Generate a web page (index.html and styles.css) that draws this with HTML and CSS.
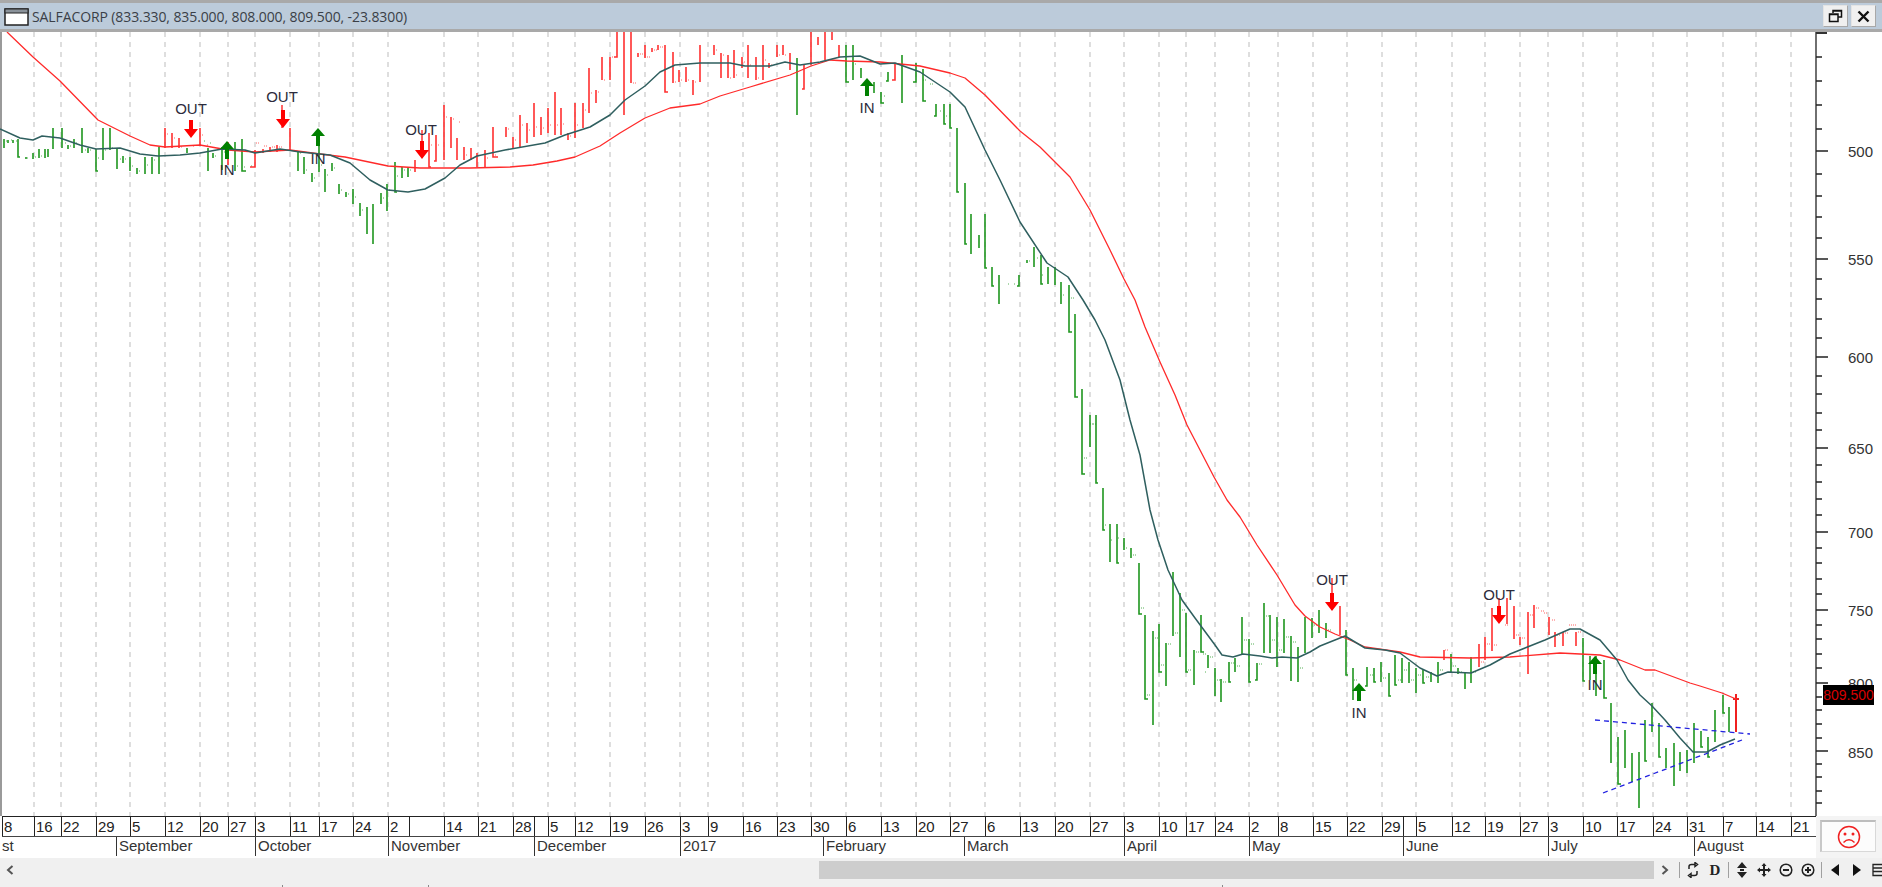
FILE: index.html
```html
<!DOCTYPE html>
<html lang="en">
<head>
<meta charset="utf-8">
<title>SALFACORP</title>
<link rel="stylesheet" href="styles.css">
</head>
<body>
<div class="window">
  <header class="titlebar">
    <svg class="winicon" width="25" height="18" viewBox="0 0 25 18"><rect x="1" y="1" width="23" height="16" fill="#fff" stroke="#222" stroke-width="1.5"/><rect x="1" y="1" width="23" height="4" fill="#8a929a" stroke="#222" stroke-width="1"/></svg>
    <span class="title">SALFACORP (833.330, 835.000, 808.000, 809.500, -23.8300)</span>
    <div class="winbtns">
      <button class="winbtn"><svg width="15" height="14" viewBox="0 0 15 14"><path d="M5 4V1.500H13.500V8H10.500M1.500 5H10V12.500H1.500Z M1.500 5.500H10M5 2H13.500" fill="none" stroke="#111" stroke-width="1.500"/></svg></button>
      <button class="winbtn"><svg width="13" height="13" viewBox="0 0 13 13"><path d="M1.500 1.500L11.500 11.500M11.500 1.500L1.500 11.500" fill="none" stroke="#111" stroke-width="2.400"/></svg></button>
    </div>
  </header>

  <svg class="chart" width="1882" height="784" viewBox="0 32 1882 784">
    <defs>
      <path id="down" d="M-2 0H2V9H7L0 18L-7 9H-2Z"/>
      <path id="up" d="M-2 18H2V8H7L0 0L-7 8H-2Z"/>
    </defs>
    <path class="frame" d="M1 32V816"/>
    <path class="grid" d="M34 32V816M61 32V816M96 32V816M130 32V816M165 32V816M200 32V816M228 32V816M255 32V816M290 32V816M319 32V816M353 32V816M388 32V816M444 32V816M478 32V816M513 32V816M548 32V816M575 32V816M610 32V816M645 32V816M680 32V816M708 32V816M743 32V816M777 32V816M811 32V816M846 32V816M881 32V816M916 32V816M950 32V816M985 32V816M1020 32V816M1055 32V816M1090 32V816M1124 32V816M1159 32V816M1186 32V816M1215 32V816M1249 32V816M1278 32V816M1313 32V816M1347 32V816M1382 32V816M1416 32V816M1452 32V816M1485 32V816M1520 32V816M1548 32V816M1583 32V816M1617 32V816M1653 32V816M1687 32V816M1723 32V816M1756 32V816M1791 32V816"/>

    <path class="ticks green" d="M6 141h2M11 140h2M16 141h2M27 158h2M35 157h2M41 156h2M65 143h2M70 146h2M76 143h2M85 150h2M90 150h2M98 158h2M105 150h2M112 148h2M120 159h2M125 159h2M132 166h2M139 171h2M147 165h2M154 160h2M204 141h2M210 143h2M215 156h2M224 152h2M237 166h2M244 167h2M251 166h2M300 153h2M306 170h2M314 178h2M321 165h2M327 175h2M334 168h2M341 190h2M348 194h2M355 197h2M362 210h2M383 198h2M389 190h2M397 176h2M404 170h2M410 170h2M855 64h2M884 96h2M923 80h3M930 84h3M940 111h2M946 116h2M1008 284h2M1014 284h2M1029 261h2M1037 258h2M1042 275h2M1063 295h2M1071 298h3M1084 458h3M1090 424h3M1096 424h-3M1105 525h2M1111 540h2M1118 538h2M1126 548h2M1133 555h3M1141 608h3M1147 695h3M1155 638h3M1161 665h3M1168 644h3M1175 633h3M1182 610h3M1188 670h3M1196 652h3M1203 654h3M1210 657h3M1205 672h2M1217 680h3M1223 682h3M1231 663h3M1237 666h3M1244 640h3M1251 644h3M1259 664h3M1266 616h3M1272 640h3M1279 650h3M1286 637h3M1293 642h3M1300 668h3M1314 625h3M1328 630h3M1354 680h3M1370 675h3M1383 678h3M1398 680h3M1404 670h3M1411 680h3M1418 675h3M1426 677h3M1440 670h3M1453 666h3M1459 672h3M1473 672h3"/>
    <path class="ticks red" d="M167 134h2M174 138h2M181 147h2M193 146h2M202 135h2M207 145h2M230 150h2M256 143h3M264 146h3M272 147h3M279 147h3M431 145h2M438 145h2M446 117h2M453 119h2M459 122h2M466 155h2M473 158h2M487 158h2M495 155h2M508 129h2M515 140h2M522 125h2M529 130h2M536 127h2M543 128h2M550 125h2M557 125h2M563 124h2M570 136h2M577 125h2M585 110h2M591 93h2M598 92h2M604 80h2M612 57h2M633 83h3M640 54h3M647 57h3M654 50h3M660 47h3M675 82h2M681 80h2M688 80h2M695 82h2M716 50h2M723 55h2M730 78h2M736 75h2M744 62h2M750 65h2M758 78h2M765 60h2M771 65h2M779 55h2M785 55h2M1445 650h3M1481 662h3M1487 644h3M1494 645h3M1505 625h3M1516 635h3M1522 638h3M1530 615h3M1536 608h3M1541 611h3M1544 613h3M1552 620h3M1557 635h3M1565 633h3M1569 625h3M1573 625h3M1578 632h3"/>
    <path class="bars green" d="M4 139V148M8 140V143M13 140V143M18 139V157h2M26 157V159M33 153V159M39 149V158M45 149V158M48 149V157M53 128V149M62 128V148M68 145V149M74 139V148M82 128V153M88 148V153M96 149V171h2M103 128V160M110 128V150M117 148V169M123 156V163M130 157V171M137 168V174M145 157V174M152 157V174M159 147V174M187 148V153M208 148V171M213 153V158M222 147V170M235 142V171M242 139V171h4M298 151V171M304 157V174M312 173V182M319 130V172M325 169V192M332 163V171M339 184V194M346 192V197M353 189V204M360 203V216M367 207V234M373 204V244M381 193V204M387 184V211M395 162V192h2M402 167V178M408 167V177M797 58V115M846 45V82h3M853 45V80M861 68V78M874 82V93M881 92V103h3M888 72V81h-2M902 55V103M916 63V82h-3M923 69V101h3M936 104V116h-2M944 104V124h2M950 104V128h2M957 128V192h2M965 183V244h2M971 214V254M979 235V248M985 214V268h2M992 267V286h2M999 275V304M1019 275V286h-2M1027 260V263M1034 247V267M1041 255V284h2M1048 267V284M1055 267V285M1061 282V304M1069 285V332h3M1075 314V397h3M1082 389V474h3M1090 415V447M1096 415V483h2M1103 488V530h2M1110 524V562M1117 524V563h2M1124 538V550M1131 548V558M1139 563V614h3M1145 615V699h3M1153 631V725M1159 624V672h3M1166 643V686M1173 572V636M1180 593V657M1186 613V672h2M1194 650V685M1201 615V652h3M1208 655V668M1215 668V696M1221 679V702M1229 662V682h2M1235 658V672M1242 617V654M1249 639V682h2M1257 663V680h-2M1264 603V653M1270 615V653M1277 617V667M1284 619V653M1291 636V681M1298 647V682M1305 617V653M1312 618V638M1319 610V633M1326 623V638M1346 630V675h2M1353 668V700M1367 667V686h-2M1374 668V682h2M1381 662V682M1389 673V696h2M1395 655V685h2M1402 658V683M1409 662V683M1416 668V693M1423 670V683h2M1431 672V682M1438 662V683M1451 654V672M1458 668V674M1465 673V689M1471 657V683M1583 638V681h2M1590 656V680M1596 656V696M1604 660V698h3M1611 703V763M1618 737V784h3M1625 730V768M1632 753V782M1639 752V808M1645 720V761h2M1652 703V732M1659 723V757h2M1666 748V768M1674 743V786M1680 752V771M1687 750V773M1694 723V763M1701 731V747h2M1708 737V757h2M1715 710V742M1723 695V713h2M1729 707V732"/>
    <path class="bars red" d="M165 128V148M172 133V148M179 138V148M200 128V145M228 142V165M255 150V167h-5M263 149V153M270 147V152M277 145V152M290 128V150M415 160V172M429 133V167h2M436 135V161h-2M444 105V160M451 117V148M457 138V160M464 147V160M471 148V160M477 153V167M485 150V167M493 127V157h5M506 127V137M513 137V148M520 115V148M527 123V143M534 103V137M541 117V135M548 108V133M555 92V135M561 108V135M568 133V140M575 103V138M583 103V128M589 68V113M596 90V103M602 57V80M610 57V80M617 32V57h-3M624 32V115M631 32V83M638 53V57M645 45V58M652 48V52M658 45V50M665 45V92h3M673 52V83M679 70V82M686 67V82M693 80V95M700 45V82M714 45V55M721 53V78M728 55V78M734 50V78M742 57V68M748 45V78M756 57V80M763 45V80M769 63V68M777 45V57M783 45V55M790 53V70M804 65V89h-2M811 32V65M818 37V45M825 32V60M832 32V40M839 45V57M895 63V80h-3M1340 606V635M1444 650V660M1479 644V667M1485 637V660M1492 608V651M1507 598V624M1514 606V639M1520 637V645M1528 612V674M1534 605V628M1549 617V635M1555 632V647M1563 632V646M1576 632V646"/>
    <path class="lastbar" d="M1736 694V732M1733 699H1739"/>

    <polyline class="ma-slow" points="7,32 33,57 60,81 98,120 130,136 150,145 165,147 200,145 228,150 255,152 290,150 320,154 345,157 388,166 420,168 444,168 470,168 510,167 533,165 557,161 575,157 600,146 620,133 645,118 670,108 700,104 720,96 750,87 790,75 811,66 830,60 847,61 880,62 920,66 950,73 965,78 985,95 1020,131 1040,147 1058,165 1070,177 1090,210 1110,250 1124,279 1135,300 1145,327 1160,362 1175,395 1187,425 1200,450 1214,477 1227,500 1240,517 1257,545 1277,575 1295,605 1305,616 1320,627 1335,634 1350,640 1365,647 1400,652 1420,657 1470,658 1510,657 1560,653 1600,655 1620,660 1645,670 1655,670 1690,683 1700,686 1722,693 1736,699"/>
    <polyline class="ma-fast" points="0,129 20,138 33,140 42,136 60,138 80,145 96,149 120,148 140,154 158,156 180,155 200,153 222,149 245,150 255,153 280,149 300,152 330,155 350,163 370,180 388,190 408,192 425,189 445,178 460,165 477,156 505,150 545,143 565,135 590,127 610,115 625,100 645,86 660,72 675,65 700,63 730,63 745,66 770,66 785,62 800,65 820,62 840,57 860,56 880,64 895,63 920,72 950,92 965,107 985,150 1000,180 1020,222 1047,263 1068,277 1083,300 1095,320 1105,340 1120,380 1130,420 1140,455 1150,510 1158,540 1168,570 1182,600 1195,618 1215,645 1222,655 1233,657 1243,654 1260,656 1272,658 1282,657 1297,658 1310,652 1320,646 1345,636 1365,648 1385,650 1400,653 1420,668 1437,676 1448,672 1471,673 1490,665 1510,654 1545,640 1570,629 1580,629 1600,640 1617,660 1628,680 1640,695 1652,706 1665,720 1680,738 1693,752 1707,752 1720,745 1735,739"/>

    <path class="trend" d="M1595 720L1750 734M1603 793L1742 740"/>

    <g class="sell">
      <path class="stem" d="M282 105V128M422 130V158M1332 578V610M1499 598V622"/>
      <use href="#down" x="191" y="120"/>
      <use href="#down" x="283" y="110"/>
      <use href="#down" x="422" y="141"/>
      <use href="#down" x="1332" y="593"/>
      <use href="#down" x="1499" y="606"/>
    </g>
    <g class="buy">
      <use href="#up" x="227" y="141"/>
      <use href="#up" x="318" y="128"/>
      <use href="#up" x="867" y="78"/>
      <use href="#up" x="1359" y="683"/>
      <use href="#up" x="1595" y="656"/>
    </g>
    <g class="signal">
      <text x="191" y="114">OUT</text>
      <text x="282" y="102">OUT</text>
      <text x="421" y="135">OUT</text>
      <text x="1332" y="585">OUT</text>
      <text x="1499" y="600">OUT</text>
      <text x="227" y="175">IN</text>
      <text x="318" y="164">IN</text>
      <text x="867" y="113">IN</text>
      <text x="1359" y="718">IN</text>
      <text x="1595" y="690">IN</text>
    </g>

    <path class="axis" d="M1816 32V816"/>
    <path class="axis-top" d="M1816 33H1827"/>
    <path class="axis" d="M1816 57h6M1816 81h6M1816 105h6M1816 129h6M1816 151h12M1816 174h6M1816 196h6M1816 217h6M1816 238h6M1816 259h12M1816 279h6M1816 299h6M1816 319h6M1816 338h6M1816 357h12M1816 376h6M1816 394h6M1816 413h6M1816 430h6M1816 448h12M1816 465h6M1816 482h6M1816 499h6M1816 515h6M1816 532h12M1816 548h6M1816 563h6M1816 579h6M1816 594h6M1816 610h12M1816 625h6M1816 639h6M1816 654h6M1816 668h6M1816 683h12M1816 697h6M1816 710h6M1816 724h6M1816 738h6M1816 751h12M1816 764h6M1816 777h6M1816 791h6M1816 803h6"/>
    <g class="scale">
      <text x="1873" y="157">500</text>
      <text x="1873" y="265">550</text>
      <text x="1873" y="363">600</text>
      <text x="1873" y="454">650</text>
      <text x="1873" y="538">700</text>
      <text x="1873" y="616">750</text>
      <text x="1873" y="689">800</text>
      <text x="1873" y="758">850</text>
    </g>
    <rect class="tag" x="1823" y="685" width="51" height="20"/>
    <text class="tagtext" x="1848.500" y="700">809.500</text>
  </svg>

  <div class="timerow">
    <div class="timeaxis">
      <div class="dates">
        <span>8</span><span>16</span><span>22</span><span>29</span><span>5</span><span>12</span><span>20</span><span>27</span><span>3</span><span>11</span><span>17</span><span>24</span><span>2</span><span></span><span>14</span><span>21</span><span>28</span><span></span><span>5</span><span>12</span><span>19</span><span>26</span><span>3</span><span>9</span><span>16</span><span>23</span><span>30</span><span>6</span><span>13</span><span>20</span><span>27</span><span>6</span><span>13</span><span>20</span><span>27</span><span>3</span><span>10</span><span>17</span><span>24</span><span>2</span><span>8</span><span>15</span><span>22</span><span>29</span><span></span><span>5</span><span>12</span><span>19</span><span>27</span><span>3</span><span>10</span><span>17</span><span>24</span><span>31</span><span>7</span><span>14</span><span>21</span>
      </div>
      <div class="months">
        <span class="first">st</span><span>September</span><span>October</span><span>November</span><span>December</span><span>2017</span><span>February</span><span>March</span><span>April</span><span>May</span><span>June</span><span>July</span><span>August</span>
      </div>
    </div>
    <div class="moodpanel">
      <div class="mood">
        <svg width="24" height="24" viewBox="0 0 24 24"><g fill="none" stroke="#f02020" stroke-width="1.500"><circle cx="12" cy="12" r="10.500"/><path d="M6.500 17.500Q12 12 17.500 17.500"/></g><circle cx="8" cy="9" r="1.500" fill="#f02020"/><circle cx="16" cy="9" r="1.500" fill="#f02020"/></svg>
      </div>
    </div>
  </div>

  <div class="scrollrow">
    <div class="scrollbar">
      <svg class="chev" width="8" height="10" viewBox="0 0 8 10"><path d="M6.500 1L2 5L6.500 9" fill="none" stroke="#555" stroke-width="2"/></svg>
      <div class="thumb"></div>
      <svg class="chev" width="8" height="10" viewBox="0 0 8 10"><path d="M1.500 1L6 5L1.500 9" fill="none" stroke="#555" stroke-width="2"/></svg>
    </div>
    <div class="tools">
      <i class="sep"></i>
      <svg class="tool" width="14" height="16" viewBox="0 0 14 16"><path d="M3 7V4.500Q3 2.500 5.500 2.500H9M9 0.500L11.500 2.500L9 4.500ZM11 9V11.500Q11 13.500 8.500 13.500H5M5 11.500L2.500 13.500L5 15.500Z" fill="none" stroke="#222" stroke-width="1.500"/></svg>
      <span class="tooltext">D</span>
      <i class="sep"></i>
      <svg class="tool" width="14" height="16" viewBox="0 0 14 16"><path d="M7 0L12 6H2ZM7 16L2 10H12Z" fill="#222"/><path d="M5 7h4v2H5z" fill="#222"/></svg>
      <svg class="tool" width="14" height="14" viewBox="0 0 14 14"><path d="M7 0L9.500 3H8V6H11V4.500L14 7L11 9.500V8H8V11H9.500L7 14L4.500 11H6V8H3V9.500L0 7L3 4.500V6H6V3H4.500Z" fill="#222"/></svg>
      <svg class="tool" width="14" height="14" viewBox="0 0 14 14"><circle cx="7" cy="7" r="5.800" fill="none" stroke="#222" stroke-width="1.500"/><path d="M4 7H10" stroke="#222" stroke-width="2"/></svg>
      <svg class="tool" width="14" height="14" viewBox="0 0 14 14"><circle cx="7" cy="7" r="5.800" fill="none" stroke="#222" stroke-width="1.500"/><path d="M4 7H10M7 4V10" stroke="#222" stroke-width="2"/></svg>
      <i class="sep"></i>
      <svg class="tool" width="14" height="14" viewBox="0 0 14 14"><path d="M11 1V13L3 7Z" fill="#111"/></svg>
      <svg class="tool" width="14" height="14" viewBox="0 0 14 14"><path d="M3 1V13L11 7Z" fill="#111"/></svg>
      <svg class="tool" width="14" height="14" viewBox="0 0 14 14"><path d="M1 1.500H14V12.500H1ZM1 5H14M1 8.500H14" fill="none" stroke="#222" stroke-width="1.300"/></svg>
    </div>
  </div>
  <div class="strip"><i></i><i></i><i></i></div>
</div>
</body>
</html>
```

FILE: styles.css
```css
* { box-sizing: border-box; }
html, body { margin: 0; padding: 0; background: #f0f0f0; }
.window { width: 1882px; height: 887px; overflow: hidden; display: flex; flex-direction: column; background: #f0f0f0; font-family: "Liberation Sans", Arial, sans-serif; }

.titlebar { flex: none; height: 32px; display: flex; align-items: center; background: #bccbda; border-top: 3px solid #a9a9a9; border-bottom: 3px solid #a9a9a9; padding-left: 4px; }
.winicon { flex: none; margin-top: 1px; }
.title { margin-left: 3px; font-family: "Open Sans", sans-serif; font-size: 14px; letter-spacing: -0.1px; color: #3a3f47; white-space: nowrap; }
.winbtns { margin-left: auto; margin-right: 6px; display: flex; gap: 3px; }
.winbtn { width: 25px; height: 22px; padding: 0; display: flex; align-items: center; justify-content: center; background: #f0f0f0; border: 1px solid #e4e4e4; border-right-color: #a8a8a8; border-bottom-color: #a8a8a8; }

.chart { display: block; flex: none; background: #fff; }
.frame { fill: none; stroke: #9a9a9a; stroke-width: 2; }
.grid { stroke: #bdbdbd; stroke-width: 1; stroke-dasharray: 5 5; fill: none; }
.bars { fill: none; stroke-width: 1.600; }
.ticks { fill: none; stroke-width: 1; stroke-dasharray: 1 1; opacity: .75; }
.green { stroke: #1f961f; }
.red { stroke: #ff3030; }
.lastbar { fill: none; stroke: #f02020; stroke-width: 2; }
.ma-slow { fill: none; stroke: #ff2a2a; stroke-width: 1.300; stroke-linejoin: round; }
.ma-fast { fill: none; stroke: #2f5f5f; stroke-width: 1.500; stroke-linejoin: round; }
.trend { fill: none; stroke: #2222e0; stroke-width: 1.300; stroke-dasharray: 5 4; }
.sell { fill: #ff0000; }
.stem { fill: none; stroke: #ff0000; stroke-width: 1.200; }
.buy { fill: #008000; }
.signal text { font-size: 15px; fill: #2c2c3c; text-anchor: middle; }
.axis { fill: none; stroke: #222; stroke-width: 1.300; }
.axis-top { fill: none; stroke: #333; stroke-width: 2; }
.scale text { font-size: 15px; fill: #333; text-anchor: end; }
.tag { fill: #000; }
.tagtext { font-size: 14px; fill: #d80000; text-anchor: middle; }

.timerow { flex: none; height: 42px; display: flex; }
.timeaxis { width: 1816px; flex: none; padding-left: 2px; background: #fff; }
.dates { height: 21px; display: grid; grid-template-columns: 32px 27px 35px 34px 35px 35px 28px 27px 35px 29px 34px 35px 21px 35px 34px 35px 21px 14px 27px 35px 35px 35px 28px 35px 34px 34px 35px 35px 35px 34px 35px 35px 35px 35px 34px 35px 27px 29px 34px 29px 35px 34px 35px 21px 13px 36px 33px 35px 28px 35px 34px 36px 34px 36px 33px 35px 25px; border-top: 1.500px solid #222; border-bottom: 1.500px solid #444; }
.dates span { border-left: 1.500px solid #222; padding-left: 1px; font-size: 15px; line-height: 19px; color: #222; overflow: hidden; white-space: nowrap; }
.months { height: 19px; display: grid; grid-template-columns: 114px 139px 133px 146px 146px 143px 141px 160px 125px 154px 145px 146px 122px; }
.months span { border-left: 1.500px solid #333; padding-left: 2px; font-size: 15px; line-height: 18px; color: #333; overflow: hidden; white-space: nowrap; }
.months .first { border-left: 0; padding-left: 0; }
.moodpanel { flex: 1; padding: 4px 6px 6px 4px; background: #f4f4f4; }
.mood { height: 32px; display: flex; align-items: center; justify-content: center; background: #fcfcfc; border: 1px solid #d8d8d8; border-top: 2px solid #bdbdbd; border-left: 2px solid #c8c8c8; }

.scrollrow { flex: none; height: 20px; margin-top: 2px; display: flex; align-items: center; }
.scrollbar { width: 1679px; flex: none; display: flex; align-items: center; height: 100%; padding-left: 6px; }
.thumb { margin-left: 805px; width: 835px; height: 18px; background: #cdcdcd; }
.chev { flex: none; margin-left: 7px; }
.scrollbar .chev:first-child { margin-left: 0; }
.tools { flex: 1; display: flex; align-items: center; gap: 8px; }
.sep { width: 1px; height: 16px; margin: 0 -2px; background: #a0a0a0; flex: none; }
.sep:first-child { margin-left: 0; }
.tool { flex: none; }
.tooltext { width: 14px; text-align: center; font-family: "Liberation Serif", serif; font-weight: bold; font-size: 15px; color: #222; }
.strip { flex: none; height: 9px; position: relative; }
.strip i { position: absolute; top: 5px; width: 1px; height: 4px; background: #888; }
.strip i:nth-child(1) { left: 282px; }
.strip i:nth-child(2) { left: 428px; }
.strip i:nth-child(3) { left: 1222px; }
```
